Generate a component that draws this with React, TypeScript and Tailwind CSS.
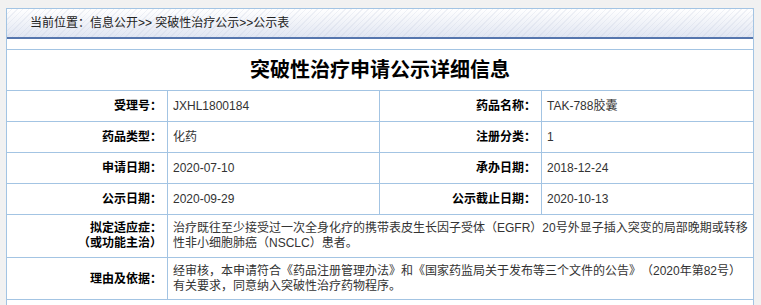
const rows: [string, string, string, string][] = [
  ['受理号：', 'JXHL1800184', '药品名称：', 'TAK-788胶囊'],
  ['药品类型：', '化药', '注册分类：', '1'],
  ['申请日期：', '2020-07-10', '承办日期：', '2018-12-24'],
  ['公示日期：', '2020-09-29', '公示截止日期：', '2020-10-13'],
];

const cell = 'flex items-center border-b border-[#a3c4e3]';

const App: React.FC = () => {
  return (
    <div
      className="h-[305px] overflow-hidden bg-[#f1f1f1] pt-[8px] text-[12px] text-[#333] [text-spacing-trim:space-all]"
      style={{ fontFamily: '"Liberation Sans", "Noto Sans CJK SC", sans-serif' }}
    >
      <div className="ml-[6px] w-[748px] border-x border-t border-[#a3c4e3] bg-white">
        {/* Breadcrumb */}
        <div className="flex h-[30px] items-center border-b-2 border-[#5676ae] bg-[repeating-linear-gradient(135deg,rgba(255,255,255,0)_0px,rgba(255,255,255,0)_3px,rgba(190,198,218,0.22)_3px,rgba(190,198,218,0.22)_4px),linear-gradient(to_bottom,#ffffff,#e1e6f2)] pl-[23px] text-[#222]">
          当前位置：信息公开&gt;&gt; 突破性治疗公示&gt;&gt;公示表
        </div>

        <div className="h-[10px]" />

        {/* Detail table */}
        <div className="grid grid-cols-[161px_212px_162px_1fr] border-t border-[#a3c4e3]">
          <div className={`${cell} col-span-4 h-[41px] justify-center text-[20px] font-bold text-black`}>
            突破性治疗申请公示详细信息
          </div>

          {rows.map(([l1, v1, l2, v2]) => (
            <div key={l1} className="contents">
              <div className={`${cell} h-[31px] justify-end border-r pr-[5px] font-bold text-black`}>{l1}</div>
              <div className={`${cell} h-[31px] border-r pl-[5px]`}>{v1}</div>
              <div className={`${cell} h-[31px] justify-end border-r pr-[5px] font-bold text-black`}>{l2}</div>
              <div className={`${cell} h-[31px] pl-[5px]`}>{v2}</div>
            </div>
          ))}

          <div className={`${cell} h-[43px] justify-end border-r pr-[5px] text-right font-bold leading-[15px] text-black`}>
            <div>
              拟定适应症：
              <br />
              （或功能主治）
            </div>
          </div>
          <div className={`${cell} col-span-3 h-[43px] whitespace-nowrap pl-[5px] leading-[15px]`}>
            <div>
              治疗既往至少接受过一次全身化疗的携带表皮生长因子受体（EGFR）20号外显子插入突变的局部晚期或转移
              <br />
              性非小细胞肺癌（NSCLC）患者。
            </div>
          </div>

          <div className={`${cell} h-[42px] justify-end border-r pr-[5px] font-bold text-black`}>理由及依据：</div>
          <div className={`${cell} col-span-3 h-[42px] whitespace-nowrap pl-[5px] leading-[15px]`}>
            <div>
              经审核，本申请符合《药品注册管理办法》和《国家药监局关于发布等三个文件的公告》（2020年第82号）
              <br />
              有关要求，同意纳入突破性治疗药物程序。
            </div>
          </div>

          <div className="col-span-4 h-[5px]" />
        </div>
      </div>
    </div>
  );
};

export default App;
